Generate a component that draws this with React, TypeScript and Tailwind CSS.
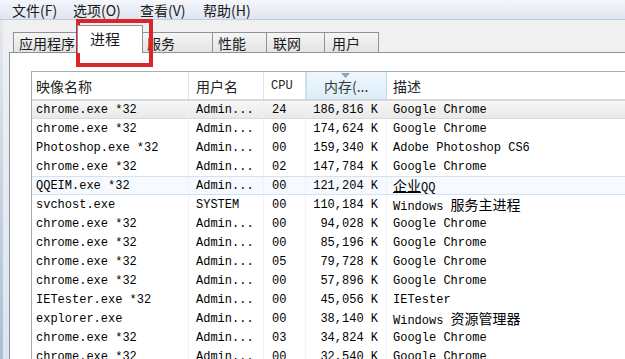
import React from 'react';

type Row = { name: string; user: string; cpu: string; mem: string; desc: React.ReactNode };

const cjk = (s: string) => <span className="font-['Noto_Sans_CJK_SC'] text-[14px]">{s}</span>;

const rows: Row[] = [
  { name: 'chrome.exe *32', user: 'Admin...', cpu: '24', mem: '186,816 K', desc: 'Google Chrome' },
  { name: 'chrome.exe *32', user: 'Admin...', cpu: '00', mem: '174,624 K', desc: 'Google Chrome' },
  { name: 'Photoshop.exe *32', user: 'Admin...', cpu: '00', mem: '159,340 K', desc: 'Adobe Photoshop CS6' },
  { name: 'chrome.exe *32', user: 'Admin...', cpu: '02', mem: '147,784 K', desc: 'Google Chrome' },
  {
    name: 'QQEIM.exe *32', user: 'Admin...', cpu: '00', mem: '121,204 K',
    desc: <><span className="font-['Noto_Sans_CJK_SC'] text-[14px] underline">企业</span>QQ</>,
  },
  { name: 'svchost.exe', user: 'SYSTEM', cpu: '00', mem: '110,184 K', desc: <>Windows {cjk('服务主进程')}</> },
  { name: 'chrome.exe *32', user: 'Admin...', cpu: '00', mem: '94,028 K', desc: 'Google Chrome' },
  { name: 'chrome.exe *32', user: 'Admin...', cpu: '00', mem: '85,196 K', desc: 'Google Chrome' },
  { name: 'chrome.exe *32', user: 'Admin...', cpu: '05', mem: '79,728 K', desc: 'Google Chrome' },
  { name: 'chrome.exe *32', user: 'Admin...', cpu: '00', mem: '57,896 K', desc: 'Google Chrome' },
  { name: 'IETester.exe *32', user: 'Admin...', cpu: '00', mem: '45,056 K', desc: 'IETester' },
  { name: 'explorer.exe', user: 'Admin...', cpu: '00', mem: '38,140 K', desc: <>Windows {cjk('资源管理器')}</> },
  { name: 'chrome.exe *32', user: 'Admin...', cpu: '03', mem: '34,824 K', desc: 'Google Chrome' },
  { name: 'chrome.exe *32', user: 'Admin...', cpu: '00', mem: '32,540 K', desc: 'Google Chrome' },
];

const menus = [
  { label: '文件(F)', w: 'w-[61px]' },
  { label: '选项(O)', w: 'w-[67px]' },
  { label: '查看(V)', w: 'w-[63px]' },
  { label: '帮助(H)', w: 'w-[60px]' },
];

export default function App() {
  return (
    <div className="relative w-[625px] h-[359px] overflow-hidden bg-[#f0f0f0] flex flex-col font-['Noto_Sans_CJK_SC',sans-serif] text-[#1a1a1a]">
      {/* menu bar */}
      <div className="h-[20px] shrink-0 flex items-center pl-[12px] bg-gradient-to-b from-[#f4f6fb] to-[#dfe5f1] border-b border-[#c3cad8] text-[14px] leading-none">
        {menus.map(m => (
          <span key={m.label} className={m.w}>{m.label}</span>
        ))}
      </div>

      <div className="flex flex-1 min-h-0">
        {/* window frame */}
        <div className="w-[9px] shrink-0 flex">
          <div className="w-[3px] bg-gradient-to-b from-[#e4e8ee] to-[#a9bfd6]" />
          <div className="flex-1 bg-gradient-to-b from-[#f0f0f0] to-[#dbe5ef]" />
        </div>

        <div className="flex-1 flex flex-col min-w-0">
          {/* tabs */}
          <div className="h-[32px] shrink-0 flex items-end pl-[4px] text-[14px] leading-none">
            <div className="w-[66px] h-[20px] border-l border-t border-[#8e9199] bg-gradient-to-b from-[#f5f5f5] to-[#e4e4e4] pl-[5px] pt-[3px]">应用程序</div>
            <div className="relative z-10 w-[66px] h-[28px] -ml-[2px] -mr-[1px] -mb-px border-l border-t border-r border-[#8e9199] bg-white pl-[12px] pt-[5px] text-[15px]">进程</div>
            <div className="w-[71px] h-[20px] border-t border-r border-[#8e9199] bg-gradient-to-b from-[#f5f5f5] to-[#e4e4e4] pl-[5px] pt-[3px]">服务</div>
            <div className="w-[54px] h-[20px] border-t border-r border-[#8e9199] bg-gradient-to-b from-[#f5f5f5] to-[#e4e4e4] pl-[5px] pt-[3px]">性能</div>
            <div className="w-[58px] h-[20px] border-t border-r border-[#8e9199] bg-gradient-to-b from-[#f5f5f5] to-[#e4e4e4] pl-[6px] pt-[3px]">联网</div>
            <div className="w-[54px] h-[20px] border-t border-r border-[#8e9199] bg-gradient-to-b from-[#f5f5f5] to-[#e4e4e4] pl-[7px] pt-[3px]">用户</div>
          </div>

          {/* panel */}
          <div className="flex-1 min-h-0 bg-white border-l border-t border-[#8e9199] pl-[21px] pt-[18px]">
            <div className="h-full border-l border-t border-[#a9adb3] flex flex-col">
              {/* header */}
              <div className="h-[28px] shrink-0 flex border-b border-[#d5d5d5] text-[14px] text-[#222] leading-none">
                <div className="w-[157px] flex items-center pl-[4px] border-r border-[#e2e2e2]">映像名称</div>
                <div className="w-[75px] flex items-center pl-[7px] border-r border-[#e2e2e2]">用户名</div>
                <div className="w-[42px] flex items-center pl-[7px] border-r border-[#e2e2e2] font-['Liberation_Mono',monospace] text-[12px]">CPU</div>
                <div className="relative w-[81px] flex items-center pl-[17px] bg-gradient-to-b from-[#eef7fd] to-[#dcedf9] border-x border-[#bcdcf1] text-[#3a3a3a]">
                  <svg className="absolute top-[1px] left-[34px]" width="9" height="5" viewBox="0 0 9 5">
                    <path d="M0 0 H9 L4.5 5 Z" fill="#8fa3b8" />
                  </svg>
                  内存(...
                </div>
                <div className="flex-1 flex items-center pl-[6px]">描述</div>
              </div>

              {/* rows */}
              <div className="flex-1 min-h-0 overflow-hidden font-['Liberation_Mono','Noto_Sans_CJK_SC',monospace] text-[12px] text-black">
                {rows.map((r, i) => (
                  <div
                    key={i}
                    className={
                      'h-[19px] flex items-center whitespace-nowrap ' +
                      (i === 0
                        ? 'bg-gradient-to-b from-[#f7f7f7] to-[#e9e9e9] border-y border-[#dadada]'
                        : i === 4
                        ? 'bg-[#f6fafe] border-y border-[#cfe3f5]'
                        : '')
                    }
                  >
                    <div className="w-[157px] shrink-0 pl-[4px] h-full flex items-center border-r border-[#f2f2f2]">{r.name}</div>
                    <div className="w-[75px] shrink-0 pl-[7px] h-full flex items-center border-r border-[#f2f2f2]">{r.user}</div>
                    <div className="w-[42px] shrink-0 pl-[8px] h-full flex items-center border-r border-[#f2f2f2]">{r.cpu}</div>
                    <div className="w-[81px] shrink-0 pr-[8px] h-full flex items-center justify-end border-r border-[#f2f2f2]">{r.mem}</div>
                    <div className="flex-1 pl-[6px] h-full flex items-center">
                      <span className="whitespace-pre">{r.desc}</span>
                    </div>
                  </div>
                ))}
              </div>
            </div>
          </div>
        </div>
      </div>

      {/* red highlight box */}
      <div className="absolute left-[76px] top-[19px] w-[77px] h-[48px] border-4 border-[#d8262b] pointer-events-none" />
    </div>
  );
}
